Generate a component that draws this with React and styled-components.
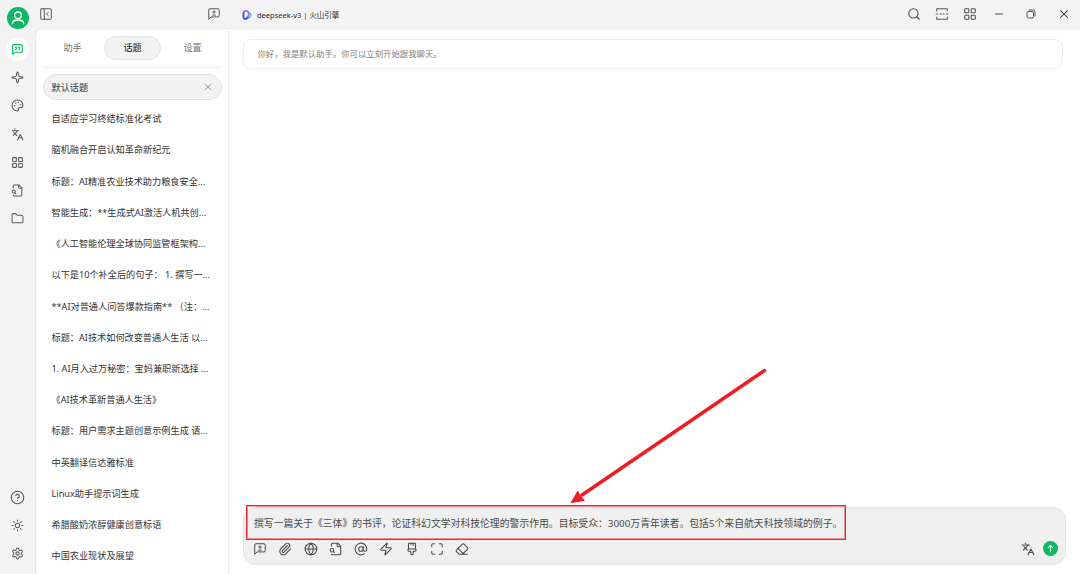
import React from 'react';
import styled, { createGlobalStyle, css } from 'styled-components';
import {
    AtSign, CircleHelp, Eraser, Folder, Globe, Languages, LayoutGrid, Maximize,
    Minus, PaintbrushVertical, Palette, Paperclip, Search, Sparkle, Sun, X, Zap,
} from 'lucide-react';

const GlobalStyle = createGlobalStyle`
    * { box-sizing: border-box; }
    body {
        margin: 0;
        overflow: hidden;
        background: #f3f3f3;
        font-family: "Noto Sans", "Noto Sans CJK SC", sans-serif;
        color: #333;
    }
`;

const Window = styled.div`
    position: relative;
    display: flex;
    width: 1080px;
    height: 574px;
    background: #f3f3f3;
    overflow: hidden;
`;

const Rail = styled.nav`
    display: flex;
    flex-direction: column;
    align-items: center;
    justify-content: space-between;
    width: 35px;
    padding: 7px 0 9px;
`;

const RailGroup = styled.div`
    display: flex;
    flex-direction: column;
    align-items: center;
    gap: 5.1px;
`;

const Avatar = styled.div`
    display: flex;
    align-items: center;
    justify-content: center;
    width: 22px;
    height: 22px;
    margin: 0 0 4.2px 0;
    border-radius: 50%;
    background: #0bb963;
    color: #fff;
`;

const RailButton = styled.div`
    display: flex;
    align-items: center;
    justify-content: center;
    width: 23px;
    height: 23px;
    border-radius: 50%;
    color: #5a5a5a;
    ${({ $active }) => $active && css`
        background: #fff;
        color: #0bb963;
    `}
`;

const Workspace = styled.div`
    display: flex;
    flex-direction: column;
    flex: 1;
`;

const TitleBar = styled.header`
    display: flex;
    align-items: center;
    height: 28px;
    color: #555;
`;

const PanelTools = styled.div`
    display: flex;
    justify-content: space-between;
    width: 193px;
    padding: 0 7px 0 4px;
`;

const ModelName = styled.div`
    display: flex;
    align-items: center;
    gap: 5px;
    flex: 1;
    padding: 1px 0 0 13px;
    font-size: 7.5px;
    line-height: 14px;
    color: #2a2a2a;
    white-space: nowrap;
`;

const WindowTools = styled.div`
    display: flex;
    align-items: center;
    gap: 14px;
    padding-right: 9px;
`;

const WindowControls = styled.div`
    display: flex;
    align-items: center;
    gap: 20px;
    margin-left: 2px;
`;

const Content = styled.div`
    display: flex;
    flex: 1;
    min-height: 0;
    border: 1px solid #e9e9e9;
    border-right: 0;
    border-bottom: 0;
    border-top-left-radius: 8px;
    background: #fff;
`;

const Sidebar = styled.aside`
    width: 193px;
    padding: 7px 6px 0 7px;
    border-right: 1px solid #ececec;
    overflow: hidden;
`;

const Tabs = styled.div`
    display: flex;
    justify-content: space-between;
    padding: 0 1px 7px 1px;
    margin-bottom: 6px;
    border-bottom: 1px solid #ececec;
`;

const Tab = styled.div`
    width: 57px;
    height: 24px;
    border: 1px solid ${({ $active }) => ($active ? '#e4e4e4' : 'transparent')};
    border-radius: 12px;
    background: ${({ $active }) => ($active ? '#f2f2f2' : 'transparent')};
    color: ${({ $active }) => ($active ? '#111' : '#777')};
    font-size: 9.13px;
    line-height: 22px;
    text-align: center;
`;

const Topic = styled.div`
    display: flex;
    align-items: center;
    justify-content: space-between;
    height: 26px;
    margin-bottom: 5.23px;
    padding: 0 7px 0 7.5px;
    border: 1px solid ${({ $active }) => ($active ? '#e2e2e2' : 'transparent')};
    border-radius: 13px;
    background: ${({ $active }) => ($active ? '#f2f2f2' : 'transparent')};
    font-size: 9.17px;
    color: #333;
    white-space: pre;
    svg { color: #999; }
`;

const Chat = styled.main`
    display: flex;
    flex-direction: column;
    justify-content: space-between;
    flex: 1;
    padding: 10px 14px 9px;
`;

const Prompt = styled.div`
    height: 30px;
    margin-right: 3px;
    padding: 0 13.5px;
    border: 1px solid #ececec;
    border-radius: 8px;
    font-size: 8.4px;
    line-height: 28px;
    color: #808080;
`;

const Composer = styled.div`
    display: flex;
    flex-direction: column;
    justify-content: space-between;
    height: 58px;
    padding: 7px 7px 8px 9px;
    border: 1px solid #e2e2e2;
    border-radius: 13px;
    background: #f0f0f0;
    color: #4a4a4a;
`;

const Draft = styled.div`
    padding-left: 1px;
    font-size: 9.84px;
    line-height: 16px;
    white-space: nowrap;
`;

const Toolbar = styled.div`
    display: flex;
    align-items: center;
    justify-content: space-between;
`;

const ToolGroup = styled.div`
    display: flex;
    align-items: center;
    gap: ${({ $gap }) => $gap};
`;

const Send = styled.div`
    display: flex;
    align-items: center;
    justify-content: center;
    width: 15px;
    height: 15px;
    border-radius: 50%;
    background: #0bb963;
    color: #fff;
`;

const Highlight = styled.div`
    position: absolute;
    left: 246px;
    top: 505px;
    width: 600px;
    height: 35px;
    border: 1px solid #ec2730;
    box-shadow: inset 0 0 0 1px rgba(236, 39, 48, 0.5);
`;

const Arrow = styled.svg`
    position: absolute;
    left: 560px;
    top: 360px;
`;

const icon = { size: 14, strokeWidth: 1.85 };
// odd size keeps the glyph centred in the 23px rail button
const railIcon = { size: 13, strokeWidth: 1.9 };

const Glyph = ({ size = 14, stroke = 1.85, children }) => (
    <svg width={size} height={size} viewBox="0 0 24 24" fill="none" stroke="currentColor" strokeWidth={stroke} strokeLinecap="round" strokeLinejoin="round">
        {children}
    </svg>
);

const bubble = 'M21 15a2 2 0 0 1-2 2H7l-4 4V5a2 2 0 0 1 2-2h14a2 2 0 0 1 2 2z';

const UserIcon = () => (
    <Glyph size={16} stroke={2}>
        <circle cx="12" cy="8" r="5" />
        <path d="M3.500 20.500c0-3.500 3-5.500 8.500-5.500s8.500 2 8.500 5.500" />
    </Glyph>
);

const QuoteBubble = () => (
    <Glyph size={13} stroke={2}>
        <path d={bubble} />
        <path d="M8 12a2 2 0 0 0 2-2V8H8" />
        <path d="M14 12a2 2 0 0 0 2-2V8h-2" />
    </Glyph>
);

const NewTopic = () => (
    <Glyph stroke={1.7}>
        <path d={bubble} />
        <path d="M9 8.600h6M12 6v5.200M9 13.800h6" strokeLinecap="butt" />
    </Glyph>
);

const FileSearch = ({ size }) => (
    <Glyph size={size}>
        <path d="M14 2v4a2 2 0 0 0 2 2h4" />
        <path d="M4.268 21a2 2 0 0 0 1.727 1H18a2 2 0 0 0 2-2V7l-5-5H6a2 2 0 0 0-2 2v3" />
        <path d="m9 18-1.500-1.500" />
        <circle cx="5" cy="14" r="3" />
    </Glyph>
);

const Gear = () => (
    <Glyph size={13} stroke={1.9}>
        <path d="M12.220 2h-.440a2 2 0 0 0-2 2v.180a2 2 0 0 1-1 1.730l-.430.250a2 2 0 0 1-2 0l-.150-.080a2 2 0 0 0-2.730.730l-.220.380a2 2 0 0 0 .730 2.730l.150.100a2 2 0 0 1 1 1.720v.510a2 2 0 0 1-1 1.740l-.150.090a2 2 0 0 0-.730 2.730l.220.380a2 2 0 0 0 2.730.730l.150-.080a2 2 0 0 1 2 0l.430.250a2 2 0 0 1 1 1.730V20a2 2 0 0 0 2 2h.440a2 2 0 0 0 2-2v-.180a2 2 0 0 1 1-1.730l.430-.250a2 2 0 0 1 2 0l.150.080a2 2 0 0 0 2.730-.730l.220-.390a2 2 0 0 0-.730-2.730l-.150-.080a2 2 0 0 1-1-1.740v-.500a2 2 0 0 1 1-1.740l.150-.090a2 2 0 0 0 .730-2.730l-.220-.380a2 2 0 0 0-2.730-.730l-.150.080a2 2 0 0 1-2 0l-.430-.250a2 2 0 0 1-1-1.730V4a2 2 0 0 0-2-2z" />
        <circle cx="12" cy="12" r="3" />
    </Glyph>
);

const CollapsePanel = () => (
    <Glyph stroke={1.7}>
        <rect x="3" y="3" width="18" height="18" rx="1" />
        <path d="M9 3v18M16 9l-3 3 3 3" />
    </Glyph>
);

const NarrowMode = () => (
    <Glyph stroke={1.8}>
        <path d="M3 7V3h18v4M3 17v4h18v-4" />
        <path d="M2 12h2.500M8.500 12h2M13.500 12h2M19.500 12H22" />
    </Glyph>
);

const Restore = () => (
    <Glyph size={12} stroke={2}>
        <rect x="4" y="7" width="13" height="13" rx="3" />
        <path d="M8 4h8a4 4 0 0 1 4 4v8" />
    </Glyph>
);

const Logo = () => (
    <svg width="11" height="12" viewBox="0 0 22 24" fill="none">
        <circle cx="11" cy="12" r="11" fill="#fff" />
        <path d="M14 18c5-1 7-7 3-10" stroke="#3adbc4" strokeWidth="4" strokeLinecap="round" />
        <path d="M5 9c0-6 8-7 10-2 1 3 0 6-1 8" stroke="#a46af7" strokeWidth="3.600" strokeLinecap="round" />
        <path d="M5 9v8c1 4 6 4 8 0" stroke="#4448f8" strokeWidth="3.800" strokeLinecap="round" />
    </svg>
);

const topics = [
    '自适应学习终结标准化考试',
    '脑机融合开启认知革命新纪元',
    '标题：AI精准农业技术助力粮食安全...',
    '智能生成：**生成式AI激活人机共创...',
    '《人工智能伦理全球协同监管框架构...',
    '以下是10个补全后的句子： 1. 撰写一...',
    '**AI对普通人问答爆款指南** （注：...',
    '标题：AI技术如何改变普通人生活 以...',
    '1. AI月入过万秘密：宝妈兼职新选择 ...',
    '《AI技术革新普通人生活》',
    '标题：用户需求主题创意示例生成 请...',
    '中英翻译信达雅标准',
    'Linux助手提示词生成',
    '希腊酸奶浓醇健康创意标语',
    '中国农业现状及展望',
];

const App = () => {
    return (
        <Window lang="zh-CN">
            <GlobalStyle />
            <Rail>
                <RailGroup>
                    <Avatar><UserIcon /></Avatar>
                    <RailButton $active><QuoteBubble /></RailButton>
                    <RailButton><Sparkle {...railIcon} /></RailButton>
                    <RailButton><Palette {...railIcon} /></RailButton>
                    <RailButton><Languages {...railIcon} /></RailButton>
                    <RailButton><LayoutGrid {...railIcon} /></RailButton>
                    <RailButton><FileSearch size={13} /></RailButton>
                    <RailButton><Folder {...railIcon} /></RailButton>
                </RailGroup>
                <RailGroup>
                    <RailButton><CircleHelp size={15} strokeWidth={1.8} /></RailButton>
                    <RailButton><Sun {...railIcon} /></RailButton>
                    <RailButton><Gear /></RailButton>
                </RailGroup>
            </Rail>
            <Workspace>
                <TitleBar>
                    <PanelTools>
                        <CollapsePanel />
                        <NewTopic />
                    </PanelTools>
                    <ModelName>
                        <Logo />
                        <span>deepseek-v3 | 火山引擎</span>
                    </ModelName>
                    <WindowTools>
                        <Search {...icon} />
                        <NarrowMode />
                        <LayoutGrid {...icon} />
                        <WindowControls>
                            <Minus size={12} strokeWidth={2} />
                            <Restore />
                            <X size={14} strokeWidth={1.8} color="#333" />
                        </WindowControls>
                    </WindowTools>
                </TitleBar>
                <Content>
                    <Sidebar>
                        <Tabs>
                            <Tab>助手</Tab>
                            <Tab $active>话题</Tab>
                            <Tab>设置</Tab>
                        </Tabs>
                        <Topic $active>
                            默认话题
                            <X size={12} strokeWidth={1.9} />
                        </Topic>
                        {topics.map((topic) => <Topic key={topic}>{topic}</Topic>)}
                    </Sidebar>
                    <Chat>
                        <Prompt>你好，我是默认助手。你可以立刻开始跟我聊天。</Prompt>
                        <Composer>
                            <Draft>撰写一篇关于《三体》的书评，论证科幻文学对科技伦理的警示作用。目标受众：3000万青年读者。包括5个来自航天科技领域的例子。</Draft>
                            <Toolbar>
                                <ToolGroup $gap="11.3px">
                                    <NewTopic />
                                    <Paperclip {...icon} />
                                    <Globe {...icon} />
                                    <FileSearch />
                                    <AtSign {...icon} />
                                    <Zap {...icon} />
                                    <PaintbrushVertical {...icon} />
                                    <Maximize {...icon} />
                                    <Eraser {...icon} />
                                </ToolGroup>
                                <ToolGroup $gap="8px">
                                    <Languages {...icon} />
                                    <Send>
                                        <Glyph size={11} stroke={2.2}><path d="M12 19V5M6.500 10.500 12 5l5.500 5.500" /></Glyph>
                                    </Send>
                                </ToolGroup>
                            </Toolbar>
                        </Composer>
                    </Chat>
                </Content>
            </Workspace>
            <Highlight />
            <Arrow width="220" height="150" viewBox="0 0 220 150">
                <path d="M204.500 10.500 22 135" stroke="#ee1c25" strokeWidth="3.400" strokeLinecap="round" />
                <path d="M11.500 142.500 17.800 131.500 20 136 24 140.500Z" fill="#ee1c25" stroke="#ee1c25" strokeWidth="1.200" strokeLinejoin="round" />
            </Arrow>
        </Window>
    );
};

export default App;
